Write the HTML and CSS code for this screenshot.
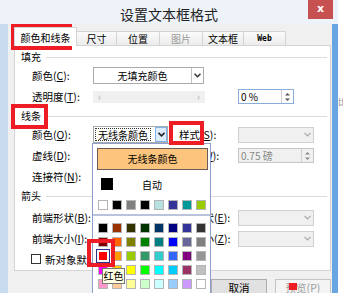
FILE: index.html
```html
<!DOCTYPE html>
<html lang="zh">
<head>
<meta charset="utf-8">
<title>设置文本框格式</title>
<link rel="stylesheet" href="styles.css">
</head>
<body>
<div class="screen">
  <div class="window">
    <div class="titlebar">
      <div class="title">设置文本框格式</div>
      <div class="close">x</div>
    </div>
    <div class="client">
      <div class="tabs">
        <div class="tab active" style="width:63px">颜色和线条</div>
        <div class="tab" style="width:40px">尺寸</div>
        <div class="tab" style="width:43px">位置</div>
        <div class="tab disabled" style="width:43px">图片</div>
        <div class="tab" style="width:41px">文本框</div>
        <div class="tab web" style="width:42px">Web</div>
      </div>
      <div class="panel">
        <div class="group-head"><span>填充</span><i></i></div>
        <div class="row r-fill">
          <span class="lbl">颜色(<u>C</u>):</span>
          <div class="select wide"><span class="val">无填充颜色</span><span class="arrow"><svg width="7" height="5" viewBox="0 0 7 5"><path d="M0.5 0.8 L3.5 3.8 L6.5 0.8" fill="none" stroke="#333" stroke-width="1.5"/></svg></span></div>
        </div>
        <div class="row r-trans">
          <span class="lbl">透明度(<u>T</u>):</span>
          <div class="slider"><span>&lsaquo;</span><span>&rsaquo;</span></div>
          <div class="spin active-spin"><span class="val">0 %</span><span class="spin-btns"><svg width="5" height="10" viewBox="0 0 5 10"><path d="M0 3.5 L2.5 1 L5 3.5 Z M0 6.5 L2.5 9 L5 6.5 Z" fill="#555"/></svg></span></div>
        </div>
        <div class="group-head"><span>线条</span><i></i></div>
        <div class="row r-line">
          <span class="lbl">颜色(<u>O</u>):</span>
          <div class="select narrow"><span class="val"><span class="focus">无线条颜色</span></span><span class="arrow pressed"><svg width="7" height="5" viewBox="0 0 7 5"><path d="M0.5 0.8 L3.5 3.8 L6.5 0.8" fill="none" stroke="#222" stroke-width="1.6"/></svg></span></div>
          <span class="lbl lbl2">样式(<u>S</u>):</span>
          <div class="select off"><span class="val"></span><span class="arrow"><svg width="7" height="5" viewBox="0 0 7 5"><path d="M0.5 0.8 L3.5 3.8 L6.5 0.8" fill="none" stroke="#a8a8a8" stroke-width="1.2"/></svg></span></div>
        </div>
        <div class="row">
          <span class="lbl">虚线(<u>D</u>):</span>
          <div class="select off narrow"><span class="val"></span><span class="arrow"></span></div>
          <span class="lbl lbl2">粗细(<u>W</u>):</span>
          <div class="spin off"><span class="val">0.75 磅</span><span class="spin-btns"><svg width="5" height="10" viewBox="0 0 5 10"><path d="M0 3.5 L2.5 1 L5 3.5 Z M0 6.5 L2.5 9 L5 6.5 Z" fill="#8a8a8a"/></svg></span></div>
        </div>
        <div class="row">
          <span class="lbl">连接符(<u>N</u>):</span>
        </div>
        <div class="group-head arrow-head"><span>箭头</span><i></i></div>
        <div class="row">
          <span class="lbl">前端形状(<u>B</u>):</span>
          <div class="select off narrow"><span class="val"></span><span class="arrow"></span></div>
          <span class="lbl lbl2 lbl-long">末端形状(<u>E</u>):</span>
          <div class="select off"><span class="val"></span><span class="arrow"><svg width="7" height="5" viewBox="0 0 7 5"><path d="M0.5 0.8 L3.5 3.8 L6.5 0.8" fill="none" stroke="#a8a8a8" stroke-width="1.2"/></svg></span></div>
        </div>
        <div class="row">
          <span class="lbl">前端大小(<u>I</u>):</span>
          <div class="select off narrow"><span class="val"></span><span class="arrow"></span></div>
          <span class="lbl lbl2 lbl-long">末端大小(<u>Z</u>):</span>
          <div class="select off"><span class="val"></span><span class="arrow"><svg width="7" height="5" viewBox="0 0 7 5"><path d="M0.5 0.8 L3.5 3.8 L6.5 0.8" fill="none" stroke="#a8a8a8" stroke-width="1.2"/></svg></span></div>
        </div>
        <div class="check-row">
          <span class="box"></span><span class="check-lbl">新对象默认值(<u>F</u>)</span>
        </div>
      </div>
      <div class="buttons">
        <div class="btn">确定</div>
        <div class="btn">取消</div>
        <div class="btn off">预览(<u>P</u>)</div>
      </div>
    </div>
  </div>
  <div class="side-glyph">比</div>

  <div class="popup">
    <div class="no-line">无线条颜色</div>
    <div class="auto-row"><span class="auto-swatch"></span><span class="auto-lbl">自动</span></div>
    <div class="swatch-row recent">
      <span class="cell"><i style="background:#ffffff"></i></span>
      <span class="cell"><i style="background:#000000"></i></span>
      <span class="cell"><i style="background:#808080"></i></span>
      <span class="cell"><i style="background:#000000"></i></span>
      <span class="cell"><i style="background:#b7e1e1"></i></span>
      <span class="cell"><i style="background:#333399"></i></span>
      <span class="cell"><i style="background:#009999"></i></span>
      <span class="cell"><i style="background:#99cc00"></i></span>
    </div>
    <div class="sep"></div>
    <div class="palette">
      <span class="cell"><i style="background:#000000"></i></span>
      <span class="cell"><i style="background:#993300"></i></span>
      <span class="cell"><i style="background:#333300"></i></span>
      <span class="cell"><i style="background:#003300"></i></span>
      <span class="cell"><i style="background:#003366"></i></span>
      <span class="cell"><i style="background:#000080"></i></span>
      <span class="cell"><i style="background:#333399"></i></span>
      <span class="cell"><i style="background:#333333"></i></span>

      <span class="cell"><i style="background:#800000"></i></span>
      <span class="cell"><i style="background:#ff6600"></i></span>
      <span class="cell"><i style="background:#808000"></i></span>
      <span class="cell"><i style="background:#008000"></i></span>
      <span class="cell"><i style="background:#008080"></i></span>
      <span class="cell"><i style="background:#0000ff"></i></span>
      <span class="cell"><i style="background:#666699"></i></span>
      <span class="cell"><i style="background:#808080"></i></span>

      <span class="cell selected"><i style="background:#ff0000"></i></span>
      <span class="cell"><i style="background:#ff9900"></i></span>
      <span class="cell"><i style="background:#99cc00"></i></span>
      <span class="cell"><i style="background:#339966"></i></span>
      <span class="cell"><i style="background:#33cccc"></i></span>
      <span class="cell"><i style="background:#3366ff"></i></span>
      <span class="cell"><i style="background:#800080"></i></span>
      <span class="cell"><i style="background:#969696"></i></span>

      <span class="cell"><i style="background:#ff00ff"></i></span>
      <span class="cell"><i style="background:#ffcc00"></i></span>
      <span class="cell"><i style="background:#ffff00"></i></span>
      <span class="cell"><i style="background:#00ff00"></i></span>
      <span class="cell"><i style="background:#00ffff"></i></span>
      <span class="cell"><i style="background:#00ccff"></i></span>
      <span class="cell"><i style="background:#993366"></i></span>
      <span class="cell"><i style="background:#c0c0c0"></i></span>

      <span class="cell"><i style="background:#ff99cc"></i></span>
      <span class="cell"><i style="background:#ffcc99"></i></span>
      <span class="cell"><i style="background:#ffff99"></i></span>
      <span class="cell"><i style="background:#ccffcc"></i></span>
      <span class="cell"><i style="background:#ccffff"></i></span>
      <span class="cell"><i style="background:#99ccff"></i></span>
      <span class="cell"><i style="background:#cc99ff"></i></span>
      <span class="cell"><i style="background:#ffffff"></i></span>
    </div>
  </div>

  <div class="tooltip">红色</div>

  <div class="mark mark-tab"></div>
  <div class="mark mark-line"></div>
  <div class="mark mark-style"></div>
  <div class="mark mark-red"></div>
  <div class="red-dot"></div>
</div>
</body>
</html>
```

FILE: styles.css
```css
* { box-sizing: border-box; }
html, body { margin: 0; padding: 0; }
body {
  width: 343px;
  height: 293px;
  overflow: hidden;
  background: #ffffff;
  font-family: "Noto Sans CJK SC", "Noto Sans", sans-serif;
  font-size: 10.5px;
  color: #000;
}
u { text-decoration: underline; text-underline-offset: 1px; }

.screen { position: relative; width: 343px; height: 293px; overflow: hidden; }

.window {
  width: 338px;
  height: 320px;
  background: #c9dbef;
  display: flex;
  flex-direction: column;
}
.titlebar {
  height: 24px;
  flex: none;
  display: flex;
  align-items: flex-start;
  background: #eef3f9;
}
.title {
  flex: 1;
  text-align: center;
  font-size: 14px;
  line-height: 20px;
  padding-top: 4px;
  padding-left: 30px;
  color: #222;
}
.close {
  width: 25px;
  height: 19px;
  margin-right: 5px;
  background: #c75050;
  color: #fff;
  font-family: "DejaVu Sans", sans-serif;
  font-weight: bold;
  font-size: 11px;
  line-height: 17px;
  text-align: center;
}

.client {
  flex: 1;
  margin-left: 8px;
  background: #f0f0f0;
  border-right: 6px solid #6aa5e3;
  padding: 3px 1px 0 6px;
  display: flex;
  flex-direction: column;
}

.tabs {
  height: 18px;
  display: flex;
  align-items: flex-end;
  position: relative;
  z-index: 1;
}
.tab {
  height: 14px;
  border: 1px solid #d4d4d4;
  border-left: none;
  border-bottom: none;
  background: linear-gradient(#fbfbfb, #ececec);
  text-align: center;
  font-size: 10px;
  line-height: 13px;
  color: #000;
}
.tab.active {
  height: 19px;
  margin-bottom: -1px;
  background: #fff;
  border-left: 1px solid #d4d4d4;
  line-height: 20px;
}
.tab.disabled { color: #9a9a9a; }
.tab.web {
  font-family: "DejaVu Sans Mono", monospace;
  font-weight: bold;
  font-size: 8px;
}

.panel {
  height: 226px;
  flex: none;
  background: #fff;
  border: 1px solid #d4d4d4;
  padding: 4px 3px 0 6px;
  display: flex;
  flex-direction: column;
}
.group-head {
  height: 14px;
  display: flex;
  align-items: center;
  gap: 5px;
  font-size: 10px;
  line-height: 14px;
}
.group-head i { flex: 1; height: 1px; background: #dcdcdc; }
.group-head + .row { margin-top: 3px; }
.row + .group-head { margin-top: 4px; }
.arrow-head { margin-bottom: 3px; }

.row {
  margin-left: 11px;
  height: 17px;
  display: grid;
  grid-template-columns: 61px 85px 60px 76px;
  align-items: center;
}
.row + .row { margin-top: 4px; }
.lbl { white-space: nowrap; line-height: 17px; }
.lbl2 { padding-left: 1px; }
.lbl-long { margin-left: -7px; }

.select {
  height: 17px;
  border: 1px solid #ababab;
  background: #fff;
  display: flex;
  font-size: 10px;
}
.select .val { flex: 1; display: flex; align-items: center; justify-content: center; }
.select .arrow {
  width: 12px;
  border-left: 1px solid #c4c4c4;
  display: flex;
  align-items: center;
  justify-content: center;
}
.select.wide { width: 111px; grid-column: 2 / 4; }
.select.narrow { width: 75px; }
.select.narrow .val { justify-content: flex-start; padding-left: 1px; }
.focus { border: 1px dotted #333; padding: 0 2px; line-height: 11px; }
.arrow.pressed { background: #dcecfc; border: 1px solid #7eb4ea; }
.select.off { background: #f0f0f0; border-color: #d0d0d0; height: 16px; }
.select.off .arrow { border-left: none; }

.slider {
  grid-column: 2 / 4;
  width: 112px;
  height: 12px;
  background: #f0f0f0;
  display: flex;
  justify-content: space-between;
  padding: 0 5px;
  color: #b0b0b0;
  font-size: 11px;
  line-height: 11px;
}
.spin {
  height: 15px;
  border: 1px solid #abadb3;
  background: #fff;
  display: flex;
  font-size: 10px;
}
.spin .val { flex: 1; padding-left: 2px; line-height: 13px; }
.spin-btns { width: 12px; border-left: 1px solid #d0d0d0; display: flex; align-items: center; justify-content: center; }
.active-spin { width: 56px; border-color: #8aaedc; }
.spin.off { width: 76px; background: #f0f0f0; border-color: #c6c6c6; color: #888; }

.check-row {
  margin-top: 5px;
  margin-left: 10px;
  height: 14px;
  display: flex;
  align-items: center;
  gap: 4px;
}
.check-row .box { width: 10px; height: 10px; border: 1px solid #333; background: #fff; }
.check-lbl { white-space: nowrap; }

.buttons {
  margin-top: 8px;
  display: flex;
  justify-content: flex-end;
  gap: 8px;
}
.btn {
  width: 56px;
  height: 21px;
  border: 1px solid #adadad;
  background: #e1e1e1;
  text-align: center;
  line-height: 15px;
  font-size: 10.5px;
}
.btn.off { color: #a0a0a0; background: #f4f4f4; border-color: #c4c4c4; }

.side-glyph {
  position: absolute;
  left: 338px;
  top: 96px;
  font-size: 8px;
  color: #888;
}

/* colour picker drop-down */
.popup {
  position: absolute;
  left: 92px;
  top: 143px;
  width: 119px;
  height: 160px;
  background: #fff;
  border: 1px solid #8e9fcb;
  padding: 4px 2px 0 3px;
  display: flex;
  flex-direction: column;
}
.no-line {
  width: 111px;
  height: 22px;
  margin-left: 1px;
  background: #fcc47c;
  border: 1px solid #6b5a5a;
  text-align: center;
  line-height: 20px;
  font-size: 10px;
}
.auto-row {
  margin-top: 8px;
  height: 12px;
  display: flex;
  align-items: center;
}
.auto-swatch { width: 12px; height: 12px; background: #000; margin-left: 5px; }
.auto-lbl { flex: 1; text-align: center; font-size: 10px; padding-right: 17px; }
.swatch-row, .palette { display: grid; grid-template-columns: repeat(8, 14px); }
.recent { margin-top: 8px; }
.cell { width: 14px; height: 14px; padding: 2px; }
.cell i { display: block; width: 10px; height: 10px; border: 1px solid #b5b5b5; }
.sep { height: 2px; background: #b9c4dc; margin: 2px -2px 5px -3px; }
.cell.selected { border: 1px solid #2e2e8c; padding: 1px; }
.cell.selected i { border: 1px solid #fff; }

.tooltip {
  position: absolute;
  left: 102px;
  top: 268px;
  width: 23px;
  height: 16px;
  background: #ffffe1;
  border: 1px solid #767676;
  font-size: 10px;
  line-height: 14px;
  text-align: center;
}

.mark { position: absolute; border: 4px solid #ee1c24; }
.mark-tab { left: 11px; top: 24px; width: 61px; height: 26px; }
.mark-line { left: 11px; top: 104px; width: 37px; height: 25px; }
.mark-style { left: 169px; top: 121px; width: 35px; height: 24px; }
.mark-red { left: 87px; top: 239px; width: 28px; height: 28px; }
.red-dot { position: absolute; left: 289px; top: 283px; width: 8px; height: 7px; background: #ee1c24; }
```
